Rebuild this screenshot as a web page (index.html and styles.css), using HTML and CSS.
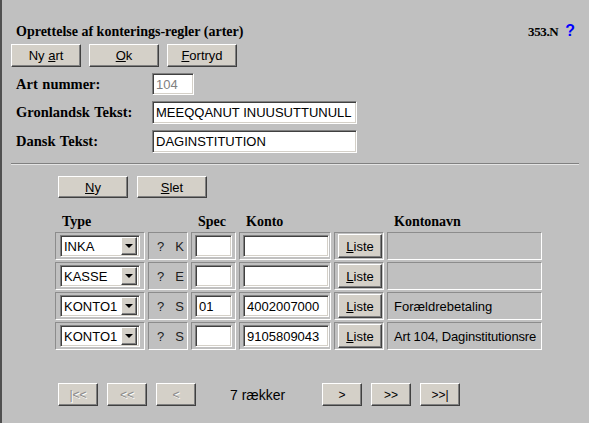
FILE: index.html
```html
<!DOCTYPE html>
<html>
<head>
<meta charset="utf-8">
<link rel="stylesheet" href="styles.css">
</head>
<body>
<div class="page">
  <div class="head">
    <div class="title">Oprettelse af konterings-regler (arter)</div>
    <div class="code">353.N <span class="help">?</span></div>
  </div>
  <div class="btnrow">
    <button class="btn w70"><span>Ny <u>a</u>rt</span></button>
    <button class="btn w70"><span><u>O</u>k</span></button>
    <button class="btn w70"><span><u>F</u>ortryd</span></button>
  </div>
  <div class="form">
    <div class="lbl">Art nummer:</div>
    <div class="field"><span class="inp num dis">104</span></div>
    <div class="lbl">Gronlandsk Tekst:</div>
    <div class="field"><span class="inp wide">MEEQQANUT INUUSUTTUNULL</span></div>
    <div class="lbl">Dansk Tekst:</div>
    <div class="field"><span class="inp wide">DAGINSTITUTION</span></div>
  </div>
  <div class="rule"></div>
  <div class="btnrow2">
    <button class="btn w70 h22"><span><u>N</u>y</span></button>
    <button class="btn w70 h22"><span><u>S</u>let</span></button>
  </div>
  <div class="grid">
    <div class="th">Type</div>
    <div class="th"></div>
    <div class="th">Spec</div>
    <div class="th">Konto</div>
    <div class="th"></div>
    <div class="th">Kontonavn</div>

    <div class="td c1"><span class="combo"><span class="ctext">INKA</span><span class="carrow"><span class="tri"></span></span></span></div>
    <div class="td c2"><span>?</span><span>K</span></div>
    <div class="td c3"><span class="inp spec"></span></div>
    <div class="td c4"><span class="inp konto"></span></div>
    <div class="td c5"><button class="btn liste"><span><u>L</u>iste</span></button></div>
    <div class="td c6"></div>

    <div class="td c1"><span class="combo"><span class="ctext">KASSE</span><span class="carrow"><span class="tri"></span></span></span></div>
    <div class="td c2"><span>?</span><span>E</span></div>
    <div class="td c3"><span class="inp spec"></span></div>
    <div class="td c4"><span class="inp konto"></span></div>
    <div class="td c5"><button class="btn liste"><span><u>L</u>iste</span></button></div>
    <div class="td c6"></div>

    <div class="td c1"><span class="combo"><span class="ctext">KONTO1</span><span class="carrow"><span class="tri"></span></span></span></div>
    <div class="td c2"><span>?</span><span>S</span></div>
    <div class="td c3"><span class="inp spec">01</span></div>
    <div class="td c4"><span class="inp konto">4002007000</span></div>
    <div class="td c5"><button class="btn liste"><span><u>L</u>iste</span></button></div>
    <div class="td c6">Forældrebetaling</div>

    <div class="td c1"><span class="combo"><span class="ctext">KONTO1</span><span class="carrow"><span class="tri"></span></span></span></div>
    <div class="td c2"><span>?</span><span>S</span></div>
    <div class="td c3"><span class="inp spec"></span></div>
    <div class="td c4"><span class="inp konto">9105809043</span></div>
    <div class="td c5"><button class="btn liste"><span><u>L</u>iste</span></button></div>
    <div class="td c6 tight">Art 104, Daginstitutionsre</div>
  </div>
  <div class="pager">
    <button class="btn pg dis">|&lt;&lt;</button>
    <button class="btn pg dis">&lt;&lt;</button>
    <button class="btn pg dis">&lt;</button>
    <span class="count">7 rækker</span>
    <button class="btn pg">&gt;</button>
    <button class="btn pg">&gt;&gt;</button>
    <button class="btn pg">&gt;&gt;|</button>
  </div>
</div>
</body>
</html>
```

FILE: styles.css
```css
html, body {
  margin: 0;
  padding: 0;
  background: #c0c0c0;
}
body {
  width: 589px;
  height: 423px;
  overflow: hidden;
  box-sizing: border-box;
  border-left: 2px solid #505050;
  font-family: "Liberation Sans", Arial, sans-serif;
  font-size: 13px;
  color: #000;
}
.page {
  padding: 23px 14px 0 7px;
}
.head {
  display: flex;
  justify-content: space-between;
  align-items: center;
  height: 18px;
}
.title {
  font-family: "Liberation Serif", "Times New Roman", serif;
  font-weight: bold;
  font-size: 14px;
  padding-left: 7px;
}
.code {
  font-family: "Liberation Serif", "Times New Roman", serif;
  font-weight: bold;
  font-size: 13px;
  letter-spacing: -0.4px;
  display: flex;
  align-items: center;
}
.help {
  font-family: "Liberation Sans", Arial, sans-serif;
  color: #0000ff;
  font-size: 16px;
  font-weight: bold;
  margin-left: 7px;
  margin-top: -2px;
  letter-spacing: 0;
}
.btn {
  box-sizing: border-box;
  background: #d4d0c8;
  border: 1px solid;
  border-color: #ffffff #404040 #404040 #ffffff;
  box-shadow: inset -1px -1px 0 #808080;
  font-family: "Liberation Sans", Arial, sans-serif;
  font-size: 13px;
  color: #000;
  padding: 0;
  margin: 0;
  height: 23px;
  display: inline-flex;
  align-items: center;
  justify-content: center;
  white-space: nowrap;
}
.btn u { text-underline-offset: 1px; }
.w70 { width: 70px; }
.h22 { height: 22px; }
.btnrow {
  display: flex;
  gap: 8px;
  margin-top: 3px;
  margin-left: 2px;
}
.form {
  display: grid;
  grid-template-columns: 136px auto;
  row-gap: 6px;
  margin-top: 6px;
  padding-left: 7px;
  align-items: center;
}
.lbl {
  font-family: "Liberation Serif", "Times New Roman", serif;
  font-weight: bold;
  font-size: 14.5px;
  word-spacing: 1px;
}
.field { display: flex; }
.inp {
  box-sizing: border-box;
  display: inline-flex;
  align-items: center;
  height: 22px;
  background: #fff;
  border: 1px solid;
  border-color: #808080 #ffffff #ffffff #808080;
  box-shadow: inset 1px 1px 0 #404040, inset -1px -1px 0 #d4d0c8;
  padding: 0 3px;
  font-size: 13px;
  white-space: nowrap;
  overflow: hidden;
}
.num { width: 42px; }
.dis { color: #808080; }
.wide { width: 205px; height: 23px; }
.rule {
  margin-top: 10px;
  margin-left: 2px;
  margin-right: -4px;
  border-top: 1px solid #808080;
  border-bottom: 1px solid #e4e4e4;
}
.btnrow2 {
  display: flex;
  gap: 9px;
  margin-top: 11px;
  margin-left: 49px;
}
.grid {
  display: grid;
  grid-template-columns: 90px 40px 45px 92px 50px 155px;
  grid-template-rows: 18px repeat(4, 28px);
  column-gap: 3px;
  row-gap: 2px;
  margin-top: 14px;
  margin-left: 46px;
}
.th {
  font-family: "Liberation Serif", "Times New Roman", serif;
  font-weight: bold;
  font-size: 14px;
  padding-left: 7px;
  display: flex;
  align-items: flex-end;
}
.td {
  box-sizing: border-box;
  border: 1px solid;
  border-color: #8c8c8c #ffffff #ffffff #8c8c8c;
  display: flex;
  align-items: center;
}
.c1 { padding-left: 4px; }
.c2 {
  padding-left: 8px;
  gap: 11px;
  font-size: 13px;
  color: #202020;
}
.c3 { padding-left: 3px; }
.c4 { padding-left: 3px; }
.c5 { padding-left: 3px; }
.c6 { padding-left: 6px; font-size: 13px; white-space: nowrap; overflow: hidden; }
.c6.tight { letter-spacing: -0.15px; }
.spec { width: 37px; }
.konto { width: 86px; }
.liste { width: 44px; height: 24px; }
.combo {
  box-sizing: border-box;
  width: 80px;
  height: 22px;
  display: flex;
  align-items: center;
  background: #fff;
  border: 1px solid;
  border-color: #808080 #ffffff #ffffff #808080;
  box-shadow: inset 1px 1px 0 #404040, inset -1px -1px 0 #d4d0c8;
  padding: 2px;
}
.ctext {
  flex: 1;
  padding-left: 1px;
  font-size: 13px;
  white-space: nowrap;
  overflow: hidden;
}
.carrow {
  box-sizing: border-box;
  flex: none;
  width: 16px;
  height: 18px;
  background: #d4d0c8;
  border: 1px solid;
  border-color: #ffffff #404040 #404040 #ffffff;
  box-shadow: inset -1px -1px 0 #808080;
  display: flex;
  align-items: center;
  justify-content: center;
}
.tri {
  width: 0;
  height: 0;
  border-left: 4px solid transparent;
  border-right: 4px solid transparent;
  border-top: 4px solid #000;
}
.pager {
  display: flex;
  gap: 9px;
  margin-top: 33px;
  margin-left: 49px;
  align-items: center;
}
.pg { width: 40px; font-size: 12px; }
.pg.dis { color: #8a8a8a; text-shadow: 1px 1px 0 #fff; }
.count {
  box-sizing: border-box;
  width: 108px;
  padding-left: 25px;
  font-size: 14px;
}
```
